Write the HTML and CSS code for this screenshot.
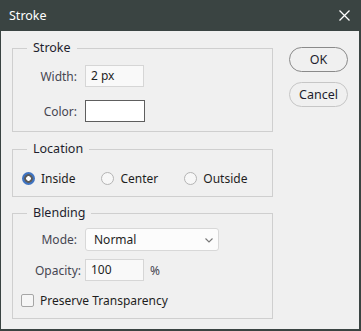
FILE: index.html
```html
<!DOCTYPE html>
<html lang="en">
<head>
    <meta charset="UTF-8">
    <title>Stroke</title>
    <link rel="stylesheet" href="styles.css">
</head>
<body>
    <div class="window">
        <div class="titlebar">
            <span class="title">Stroke</span>
            <svg class="close" width="11" height="11" viewBox="0 0 11 11">
                <path d="M0.5 0.5 L10.5 10.5 M10.5 0.5 L0.5 10.5" stroke="#fff" stroke-width="1.3" fill="none"/>
            </svg>
        </div>

        <div class="content">
            <div class="groups">
                <fieldset class="group group-stroke">
                    <legend>Stroke</legend>
                    <div class="row">
                        <label class="label">Width:</label>
                        <div class="field">2 px</div>
                    </div>
                    <div class="row">
                        <label class="label">Color:</label>
                        <div class="swatch"></div>
                    </div>
                </fieldset>

                <fieldset class="group group-location">
                    <legend>Location</legend>
                    <div class="radios">
                        <div class="radio-item"><span class="radio checked"></span>Inside</div>
                        <div class="radio-item"><span class="radio"></span>Center</div>
                        <div class="radio-item"><span class="radio"></span>Outside</div>
                    </div>
                </fieldset>

                <fieldset class="group group-blending">
                    <legend>Blending</legend>
                    <div class="row">
                        <label class="label">Mode:</label>
                        <div class="select">
                            <span>Normal</span>
                            <svg width="8" height="5" viewBox="0 0 8 5">
                                <path d="M0.5 0.5 L4 4 L7.5 0.5" stroke="#777" stroke-width="1.1" fill="none"/>
                            </svg>
                        </div>
                    </div>
                    <div class="row row-opacity">
                        <label class="label">Opacity:</label>
                        <div class="field">100</div>
                        <span class="unit">%</span>
                    </div>
                    <div class="check-row">
                        <span class="checkbox"></span>Preserve Transparency
                    </div>
                </fieldset>
            </div>

            <div class="buttons">
                <button class="btn btn-default">OK</button>
                <button class="btn">Cancel</button>
            </div>
        </div>
    </div>
</body>
</html>
```

FILE: styles.css
```css
* {
    box-sizing: border-box;
}
body {
    margin: 0;
    font-family: 'Noto Sans', 'Open Sans', sans-serif;
    font-size: 12px;
    color: #1e1e1e;
    background-color: #f0f0f0;
}
.window {
    width: 361px;
    height: 331px;
    background-color: #f0f0f0;
    border-left: 1px solid #3a4442;
    border-right: 2px solid #3a4442;
    border-bottom: 2px solid #3a4442;
    overflow: hidden;
}
.titlebar {
    height: 31px;
    background-color: #3a4442;
    display: flex;
    align-items: center;
    justify-content: space-between;
    padding: 0 9px 0 8px;
    color: #ffffff;
}
.title {
    font-size: 12.5px;
    line-height: 16px;
}
.content {
    display: flex;
    padding: 9px 0 0 11px;
    gap: 16px;
}
.groups {
    width: 261px;
    display: flex;
    flex-direction: column;
}
.group {
    margin: 0;
    padding: 0 0 9px 0;
    border: 1px solid #cfcfcf;
}
.group legend {
    margin-left: 14px;
    padding: 0 6px;
    font-size: 12.5px;
    line-height: 16px;
    color: #1e1e2e;
}
.group-stroke {
    padding-top: 9px;
}
.group-location {
    margin-top: 9px;
    padding-top: 13px;
    padding-bottom: 10px;
}
.group-blending {
    margin-top: 8px;
    padding-top: 7px;
    padding-bottom: 10px;
}
.row {
    display: flex;
    align-items: center;
    gap: 8px;
}
.row + .row {
    margin-top: 13px;
}
.group-blending .row + .row {
    margin-top: 8px;
}
.label {
    width: 64px;
    text-align: right;
    color: #464650;
}
.row-opacity .label {
    width: 68px;
    margin-right: -4px;
}
.field {
    width: 59px;
    height: 22px;
    line-height: 20px;
    padding-left: 5px;
    border: 1px solid #d6d6d6;
    background-color: #f9f9f9;
}
.swatch {
    width: 60px;
    height: 22px;
    border: 1px solid #5e5e5e;
    background-color: #ffffff;
}
.select {
    width: 134px;
    height: 23px;
    border: 1px solid #d8d8d8;
    border-radius: 3px;
    background-color: #fcfcfc;
    display: flex;
    align-items: center;
    justify-content: space-between;
    padding: 0 5px 0 8px;
}
.select svg {
    margin-top: 2px;
}
.unit {
    margin-left: -2px;
    color: #464650;
}
.radios {
    display: flex;
    gap: 26px;
    padding-left: 9px;
    height: 16px;
    align-items: center;
}
.radio-item {
    display: flex;
    align-items: center;
    gap: 6px;
}
.radio {
    width: 13px;
    height: 13px;
    border-radius: 50%;
    border: 1px solid #b4b4b4;
    background-color: #f7f7f7;
}
.radio.checked {
    border: none;
    background: radial-gradient(circle, #ffffff 0 2px, #5c5c5c 2.6px 4px, #3f74c2 4.6px);
}
.check-row {
    display: flex;
    align-items: center;
    gap: 6px;
    height: 16px;
    margin-top: 11px;
    padding-left: 8px;
}
.checkbox {
    width: 13px;
    height: 13px;
    border: 1px solid #a6a6a6;
    border-radius: 2px;
    background-color: #f6f6f6;
}
.buttons {
    display: flex;
    flex-direction: column;
    gap: 10px;
    padding-top: 7px;
}
.btn {
    width: 59px;
    height: 25px;
    border: 1px solid #c6c6c6;
    border-radius: 13px;
    background-color: #f0f0f0;
    font-family: inherit;
    font-size: 12.5px;
    color: #1e1e2e;
    padding: 0;
}
.btn-default {
    border-color: #8a8a8a;
}
```
